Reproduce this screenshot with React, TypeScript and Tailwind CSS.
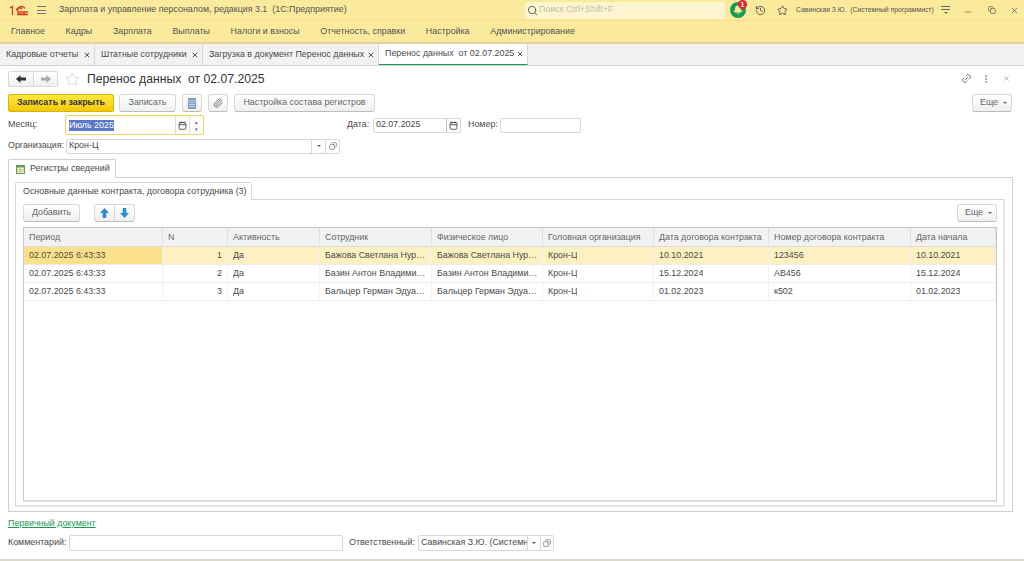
import { Star, History, Paperclip, Link2, EllipsisVertical, X, Search, Bell, Minus, Copy, Calendar } from 'lucide-react';

const MENU = ['Главное', 'Кадры', 'Зарплата', 'Выплаты', 'Налоги и взносы', 'Отчетность, справки', 'Настройка', 'Администрирование'];

const TABS = [
  { title: 'Кадровые отчеты', width: 'w-[95px]' },
  { title: 'Штатные сотрудники', width: 'w-[108px]' },
  { title: 'Загрузка в документ Перенос данных', width: 'w-[176px]' },
  { title: 'Перенос данных  от 02.07.2025', width: 'w-[149px]', active: true },
];

const COLUMNS = [
  { title: 'Период', width: 'w-[139px]' },
  { title: 'N', width: 'w-[65px]' },
  { title: 'Активность', width: 'w-[92px]' },
  { title: 'Сотрудник', width: 'w-[112px]' },
  { title: 'Физическое лицо', width: 'w-[111px]' },
  { title: 'Головная организация', width: 'w-[111px]' },
  { title: 'Дата договора контракта', width: 'w-[115px]' },
  { title: 'Номер договора контракта', width: 'w-[142px]' },
  { title: 'Дата начала', width: 'flex-1' },
];

const ROWS = [
  ['02.07.2025 6:43:33', '1', 'Да', 'Бажова Светлана Нурмухаметовна', 'Бажова Светлана Нурмухаметовна', 'Крон-Ц', '10.10.2021', '123456', '10.10.2021'],
  ['02.07.2025 6:43:33', '2', 'Да', 'Базин Антон Владимирович', 'Базин Антон Владимирович', 'Крон-Ц', '15.12.2024', 'АВ456', '15.12.2024'],
  ['02.07.2025 6:43:33', '3', 'Да', 'Бальцер Герман Эдуардович', 'Бальцер Герман Эдуардович', 'Крон-Ц', '01.02.2023', 'к502', '01.02.2023'],
];

function Button({ children, className = '' }: { children: React.ReactNode; className?: string }) {
  return (
    <button
      type="button"
      className={`h-[18px] flex items-center justify-center rounded-[3px] border border-[#d8d8d8] border-b-[#bcbcbc] bg-gradient-to-b from-white to-[#efefef] text-[#666] ${className}`}
    >
      {children}
    </button>
  );
}

function More({ className = '' }: { className?: string }) {
  return (
    <Button className={`w-[40px] gap-[5px] pl-[3px] ${className}`}>
      Еще <span className="w-0 h-0 border-x-[2px] border-x-transparent border-t-[2px] border-t-[#666]" />
    </Button>
  );
}

function CalendarIcon() {
  return <Calendar size={9} strokeWidth={2.5} className="text-[#555]" />;
}

function Dropdown() {
  return (
    <>
      <span className="w-[14px] h-full border-l border-[#d8d8d8] flex items-center justify-center">
        <span className="w-0 h-0 border-x-[2px] border-x-transparent border-t-[2px] border-t-[#555]" />
      </span>
      <span className="w-[14px] h-full border-l border-[#d8d8d8] flex items-center justify-center">
        <Copy size={8} className="text-[#666] -scale-x-100" />
      </span>
    </>
  );
}

function BlockArrow({ down = false }: { down?: boolean }) {
  return (
    <svg width="9" height="10" viewBox="0 0 9 10" className={down ? 'rotate-180' : ''}>
      <path d="M4.5 0 L9 5 H6.3 V10 H2.7 V5 H0 Z" fill="#2d8fd0" />
    </svg>
  );
}

function NavArrow({ color, right = false }: { color: string; right?: boolean }) {
  return (
    <svg width="10" height="8" viewBox="0 0 10 8" className={right ? 'rotate-180' : ''}>
      <path d="M0 4 L4.5 0 V2.6 H10 V5.4 H4.5 V8 Z" fill={color} />
    </svg>
  );
}

export default function App() {
  return (
    <div className="w-[1024px] h-[561px] overflow-hidden bg-white flex flex-col text-[8.9px] text-[#4a4a4a] font-['Liberation_Sans',Arial,sans-serif]">
      {/* заголовок окна */}
      <div className="h-[20px] bg-[#fbe99c] flex items-center pl-[9px]">
        <svg width="20" height="11" viewBox="0 0 20 11" fill="none" stroke="#d9381e" strokeWidth="1.3">
          <path d="M1 3 L3.5 1.5 V10" />
          <path d="M16 3.5 A4 4 0 1 0 16 7.5" />
          <path d="M7.5 5.5 A3 2.5 0 0 1 13 4 M8 9.5 H19 M10 7 H19" />
        </svg>
        <span className="ml-[8px] flex flex-col gap-[2.5px]">
          <span className="w-[9px] h-px bg-[#777]" />
          <span className="w-[9px] h-px bg-[#777]" />
          <span className="w-[9px] h-px bg-[#777]" />
        </span>
        <span className="ml-[13px] w-[466px] shrink-0 text-[#555] whitespace-pre">Зарплата и управление персоналом, редакция 3.1  (1С:Предприятие)</span>
        <div className="w-[200px] h-[17px] bg-[#fdf5cf] rounded-[2px] flex items-center pl-[2px] text-[#c4c0a8]">
          <Search size={11} className="text-[#555]" />
          <span className="ml-[1px]">Поиск Ctrl+Shift+F</span>
        </div>
        <div className="relative ml-[5px] w-[16px] h-[16px] rounded-full bg-[#1b9a54] flex items-center justify-center">
          <Bell size={10} fill="#fde9a0" className="text-[#fde9a0]" />
          <span className="absolute -top-[2px] -right-[1px] w-[9px] h-[9px] rounded-full bg-[#e8212b] text-white text-[7px] font-bold leading-[9px] text-center">1</span>
        </div>
        <History size={11} className="ml-[9px] text-[#555]" />
        <Star size={11} className="ml-[11px] text-[#555]" />
        <span className="ml-[8px] w-[137px] shrink-0 text-[6.8px] text-[#555] whitespace-pre">Савинская З.Ю.  (Системный программист)</span>
        <span className="ml-[8px] flex flex-col items-center gap-[2px]">
          <span className="w-[9px] h-px bg-[#666]" />
          <span className="w-[9px] h-px bg-[#666]" />
          <span className="w-0 h-0 border-x-[2px] border-x-transparent border-t-[2px] border-t-[#666]" />
        </span>
        <Minus size={8} className="ml-[14px] mt-[4px] text-[#555]" />
        <Copy size={8} className="ml-[16px] text-[#555]" />
        <X size={9} className="ml-[14px] text-[#555]" />
      </div>

      {/* меню разделов */}
      <div className="h-[24px] bg-[#fbe99c] border-t border-[#f5df8e] border-b-2 border-b-[#e0d29a] flex items-center pl-[11px] gap-[20.7px] text-[#555]">
        {MENU.map((item) => (
          <span key={item}>{item}</span>
        ))}
      </div>

      {/* открытые вкладки */}
      <div className="h-[22px] bg-[#f2f2f2] border-b border-[#d2d2d2] flex items-stretch">
        {TABS.map((tab) => (
          <div
            key={tab.title}
            className={`${tab.width} border-r border-[#d8d8d8] pl-[6px] pr-[3px] flex items-center justify-between whitespace-pre ${tab.active ? 'bg-white border-b border-b-[#1b9a54]' : ''}`}
          >
            <span>{tab.title}</span>
            <X size={8} strokeWidth={3} className="text-[#555] shrink-0" />
          </div>
        ))}
      </div>

      {/* форма документа */}
      <div className="flex-1 flex flex-col px-[8px] relative">
        <div className="absolute right-[14px] top-[7px] flex items-center gap-[9px] text-[#777]">
          <Link2 size={11} className="-rotate-45" />
          <EllipsisVertical size={10} />
          <X size={7} className="ml-[3px]" />
        </div>

        <div className="mt-[4px] h-[18px] flex items-center">
          <div className="w-[50px] h-[16px] flex rounded-[2px] border border-[#d8d8d8] bg-gradient-to-b from-white to-[#efefef]">
            <span className="w-[25px] flex items-center justify-center border-r border-[#d8d8d8]">
              <NavArrow color="#333" />
            </span>
            <span className="flex-1 flex items-center justify-center">
              <NavArrow color="#aaa" right />
            </span>
          </div>
          <Star size={15} strokeWidth={1} className="ml-[7px] text-[#c4c4c4]" />
          <span className="ml-[7px] text-[12.2px] text-[#333] whitespace-pre">Перенос данных  от 02.07.2025</span>
        </div>

        <div className="mt-[6px] flex items-center">
          <button type="button" className="h-[18px] w-[106px] rounded-[2px] border border-[#d6b500] bg-gradient-to-b from-[#ffe93a] to-[#f5c800] font-bold text-[#333]">
            Записать и закрыть
          </button>
          <Button className="ml-[5px] w-[57px]">Записать</Button>
          <Button className="ml-[6px] w-[20px]">
            <svg width="8" height="11" viewBox="0 0 8 11">
              <rect width="8" height="11" fill="#7f9fc0" />
              <path d="M1 2.5H7M1 4.5H7M1 6.5H7M1 8.5H7" stroke="#dfe8f2" strokeWidth="0.7" />
            </svg>
          </Button>
          <Button className="ml-[6px] w-[20px]">
            <Paperclip size={10} className="text-[#666]" />
          </Button>
          <Button className="ml-[6px] w-[141px]">Настройка состава регистров</Button>
          <More className="ml-auto mr-[4px]" />
        </div>

        <div className="mt-[3px] h-[20px] flex items-center">
          <span className="w-[57px]">Месяц:</span>
          <div className="w-[139px] h-[20px] border border-[#f0cf68] rounded-[2px] flex items-center pl-[3px]">
            <span className="bg-[#5b78c8] text-white leading-[11px]">Июль 2025</span>
            <span className="ml-auto w-[14px] h-full border-l border-[#ddd] flex items-center justify-center">
              <CalendarIcon />
            </span>
            <span className="w-[14px] h-full border-l border-[#ddd] flex flex-col items-center justify-center gap-[3px] text-[5px] leading-[4px]">
              <span>▴</span>
              <span>▾</span>
            </span>
          </div>
          <span className="ml-[143px] w-[26px]">Дата:</span>
          <div className="w-[88px] h-[15px] border border-[#d8d8d8] rounded-[2px] flex items-center pl-[2px]">
            <span>02.07.2025</span>
            <span className="ml-auto w-[14px] h-full border-l border-[#bbb] flex items-center justify-center">
              <CalendarIcon />
            </span>
          </div>
          <span className="ml-[7px] w-[32px]">Номер:</span>
          <div className="w-[81px] h-[15px] border border-[#d8d8d8] rounded-[2px]" />
        </div>

        <div className="mt-[3px] h-[16px] flex items-center">
          <span className="w-[58px]">Организация:</span>
          <div className="w-[274px] h-[15px] border border-[#d8d8d8] rounded-[2px] flex items-center pl-[2px]">
            <span className="mr-auto">Крон-Ц</span>
            <Dropdown />
          </div>
        </div>

        {/* группа вкладок */}
        <div className="mt-[4px] w-[108px] h-[19px] border border-b-0 border-[#d0d0d0] rounded-t-[2px] flex items-center pl-[7px] gap-[5px] bg-white relative top-px">
          <svg width="9" height="9" viewBox="0 0 9 9">
            <rect width="9" height="9" fill="#5f9e5a" />
            <path d="M1 2.5H8V8H1Z" fill="#eef5df" />
            <path d="M1 4.5H8M1 6.3H8M4 2.5V8" stroke="#d2a43f" strokeWidth="0.6" />
          </svg>
          Регистры сведений
        </div>
        <div className="h-[335px] mr-[3px] border border-[#d0d0d0] pl-[6px] pr-[7px] pt-[3px] mb-[5px]">
          <div className="w-[237px] h-[18px] border border-b-0 border-[#d8d8d8] rounded-t-[2px] flex items-center pl-[7px] bg-white relative top-px">
            Основные данные контракта, договора сотрудника (3)
          </div>
          <div className="h-[308px] border border-[#d8d8d8] border-r-2 border-b-2 border-r-[#e4e4e4] border-b-[#e4e4e4] pl-[7px] pr-[6px] pt-[4px]">
            <div className="flex items-center">
              <Button className="w-[57px]">Добавить</Button>
              <div className="ml-[14px] w-[41px] h-[18px] flex rounded-[3px] border border-[#d8d8d8] border-b-[#bcbcbc] bg-gradient-to-b from-white to-[#efefef]">
                <span className="flex-1 flex items-center justify-center border-r border-[#d8d8d8]">
                  <BlockArrow />
                </span>
                <span className="flex-1 flex items-center justify-center">
                  <BlockArrow down />
                </span>
              </div>
              <More className="ml-auto" />
            </div>

            {/* таблица регистра */}
            <div className="mt-[5px] h-[275px] border border-[#c8c8c8] border-b-2 border-b-[#dcdcdc]">
              <div className="h-[19px] flex bg-[#f2f2f2] border-b border-[#dcdcdc] text-[#666]">
                {COLUMNS.map((col) => (
                  <div key={col.title} className={`${col.width} pl-[5px] pt-px flex items-center border-r border-[#e0e0e0] whitespace-nowrap overflow-hidden`}>
                    {col.title}
                  </div>
                ))}
              </div>
              {ROWS.map((row, rowIdx) => (
                <div key={row[1]} className={`h-[18px] flex border-b border-[#ececec] ${rowIdx === 0 ? 'bg-[#fdf1c2]' : ''}`}>
                  {row.map((cell, i) => (
                    <div
                      key={i}
                      className={`${COLUMNS[i].width} min-w-0 pl-[5px] pr-[3px] flex items-center border-r border-[#f2f2f2] ${i === 1 ? 'justify-end pr-[5px]' : ''} ${rowIdx === 0 && i === 0 ? 'bg-[#fde18a]' : ''}`}
                    >
                      <span className="truncate">{cell}</span>
                    </div>
                  ))}
                </div>
              ))}
            </div>
          </div>
        </div>

        <a className="text-[#1b9a54] underline h-[12px] leading-[12px] w-fit">Первичный документ</a>

        <div className="mt-[6px] flex items-center">
          <span className="w-[61px]">Комментарий:</span>
          <div className="w-[274px] h-[16px] border border-[#d8d8d8] rounded-[2px]" />
          <span className="ml-[6px] w-[69px]">Ответственный:</span>
          <div className="w-[136px] h-[16px] border border-[#d8d8d8] rounded-[2px] flex items-center pl-[2px] overflow-hidden">
            <span className="w-[106px] shrink-0 overflow-hidden whitespace-nowrap mr-auto">Савинская З.Ю. (Системный программист)</span>
            <Dropdown />
          </div>
        </div>
      </div>
      <div className="h-[2px] bg-[#ddd8cc]" />
    </div>
  );
}
